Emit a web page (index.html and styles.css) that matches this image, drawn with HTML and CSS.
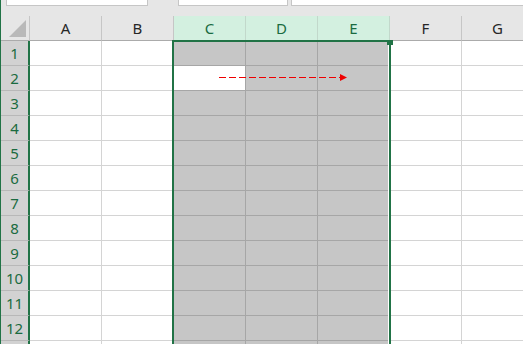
FILE: index.html
```html
<!DOCTYPE html>
<html>
<head>
<meta charset="utf-8">
<link rel="stylesheet" href="styles.css">
</head>
<body>
<div class="app">
  <div class="topbar">
    <div class="box namebox"></div>
    <div class="box fbox1"></div>
    <div class="box fbox2"></div>
  </div>
  <div class="sheet">
    <div class="grid">
      <div class="corner"><span class="tri"></span></div>
      <div class="ch">A</div><div class="ch">B</div><div class="ch sel">C</div><div class="ch sel">D</div><div class="ch sel">E</div><div class="ch">F</div><div class="ch">G</div>

      <div class="rh">1</div><div class="c"></div><div class="c"></div><div class="c s"></div><div class="c s"></div><div class="c s"></div><div class="c"></div><div class="c"></div>
      <div class="rh">2</div><div class="c"></div><div class="c"></div><div class="c s act"></div><div class="c s"></div><div class="c s"></div><div class="c"></div><div class="c"></div>
      <div class="rh">3</div><div class="c"></div><div class="c"></div><div class="c s"></div><div class="c s"></div><div class="c s"></div><div class="c"></div><div class="c"></div>
      <div class="rh">4</div><div class="c"></div><div class="c"></div><div class="c s"></div><div class="c s"></div><div class="c s"></div><div class="c"></div><div class="c"></div>
      <div class="rh">5</div><div class="c"></div><div class="c"></div><div class="c s"></div><div class="c s"></div><div class="c s"></div><div class="c"></div><div class="c"></div>
      <div class="rh">6</div><div class="c"></div><div class="c"></div><div class="c s"></div><div class="c s"></div><div class="c s"></div><div class="c"></div><div class="c"></div>
      <div class="rh">7</div><div class="c"></div><div class="c"></div><div class="c s"></div><div class="c s"></div><div class="c s"></div><div class="c"></div><div class="c"></div>
      <div class="rh">8</div><div class="c"></div><div class="c"></div><div class="c s"></div><div class="c s"></div><div class="c s"></div><div class="c"></div><div class="c"></div>
      <div class="rh">9</div><div class="c"></div><div class="c"></div><div class="c s"></div><div class="c s"></div><div class="c s"></div><div class="c"></div><div class="c"></div>
      <div class="rh">10</div><div class="c"></div><div class="c"></div><div class="c s"></div><div class="c s"></div><div class="c s"></div><div class="c"></div><div class="c"></div>
      <div class="rh">11</div><div class="c"></div><div class="c"></div><div class="c s"></div><div class="c s"></div><div class="c s"></div><div class="c"></div><div class="c"></div>
      <div class="rh">12</div><div class="c"></div><div class="c"></div><div class="c s"></div><div class="c s"></div><div class="c s"></div><div class="c"></div><div class="c"></div>
      <div class="rh">13</div><div class="c"></div><div class="c"></div><div class="c s"></div><div class="c s"></div><div class="c s"></div><div class="c"></div><div class="c"></div>
    </div>
    <div class="selection"></div>
    <span class="handle"></span>
    <svg class="arrow" width="522" height="328" viewBox="0 0 522 328">
      <line x1="218" y1="61.5" x2="340" y2="61.5" stroke="#ee0000" stroke-width="1" stroke-dasharray="7 3"/>
      <polygon points="339,58 346,61.5 339,65" fill="#ee0000"/>
    </svg>
  </div>
</div>
</body>
</html>
```

FILE: styles.css
```css
* { box-sizing: border-box; }
html, body { margin: 0; padding: 0; }
body {
  width: 523px;
  height: 344px;
  overflow: hidden;
  background: #ffffff;
  font-family: "Noto Sans", "Liberation Sans", sans-serif;
}
.app {
  height: 344px;
  border-left: 1px solid #217346;
  overflow: hidden;
}
.topbar {
  height: 16px;
  background: #e6e6e6;
  display: flex;
  align-items: flex-start;
  padding-left: 5px;
}
.box {
  height: 6px;
  background: #ffffff;
  border: 1px solid #c6c6c6;
  border-top: none;
}
.namebox { width: 142px; }
.fbox1 { width: 110px; margin-left: 30px; }
.fbox2 { flex: 1; margin-left: 3px; border-right: none; }

.sheet {
  position: relative;
}
.grid {
  display: grid;
  grid-template-columns: 29px repeat(7, 72px);
  grid-template-rows: 25px repeat(13, 25px);
}
.corner {
  background: #e6e6e6;
  border-right: 1px solid #c6c6c6;
  border-bottom: 1px solid #ababab;
  position: relative;
}
.tri {
  position: absolute;
  left: 8px;
  top: 4px;
  width: 0;
  height: 0;
  border-left: 17px solid transparent;
  border-bottom: 17px solid #b9b9b9;
}
.ch {
  background: #e6e6e6;
  border-right: 1px solid #c6c6c6;
  border-bottom: 1px solid #ababab;
  display: flex;
  align-items: center;
  justify-content: center;
  font-size: 15px;
  color: #262626;
  padding-bottom: 1px;
}
.ch.sel {
  background: #d3f0e0;
  color: #1a6b40;
  border-right-color: #c2d8cb;
}
.rh {
  background: #d2d2d2;
  border-right: 2px solid #217346;
  border-bottom: 1px solid #b8b8b8;
  display: flex;
  align-items: center;
  justify-content: center;
  font-size: 15px;
  color: #1a6b40;
  padding-bottom: 1px;
}
.c {
  background: #ffffff;
  border-right: 1px solid #d4d4d4;
  border-bottom: 1px solid #d4d4d4;
}
.c.s {
  background: #c6c6c6;
  border-right-color: #a6a6a6;
  border-bottom-color: #a6a6a6;
}
.c.s.act {
  background: #ffffff;
}
.selection {
  position: absolute;
  left: 171px;
  top: 24px;
  width: 219px;
  height: 320px;
  border: 2px solid #217346;
  box-shadow: inset -1px 0 0 #ffffff;
}
.handle {
  position: absolute;
  left: 386px;
  top: 24px;
  width: 6px;
  height: 5px;
  background: #217346;
}
.arrow {
  position: absolute;
  left: 0;
  top: 0;
}
```
